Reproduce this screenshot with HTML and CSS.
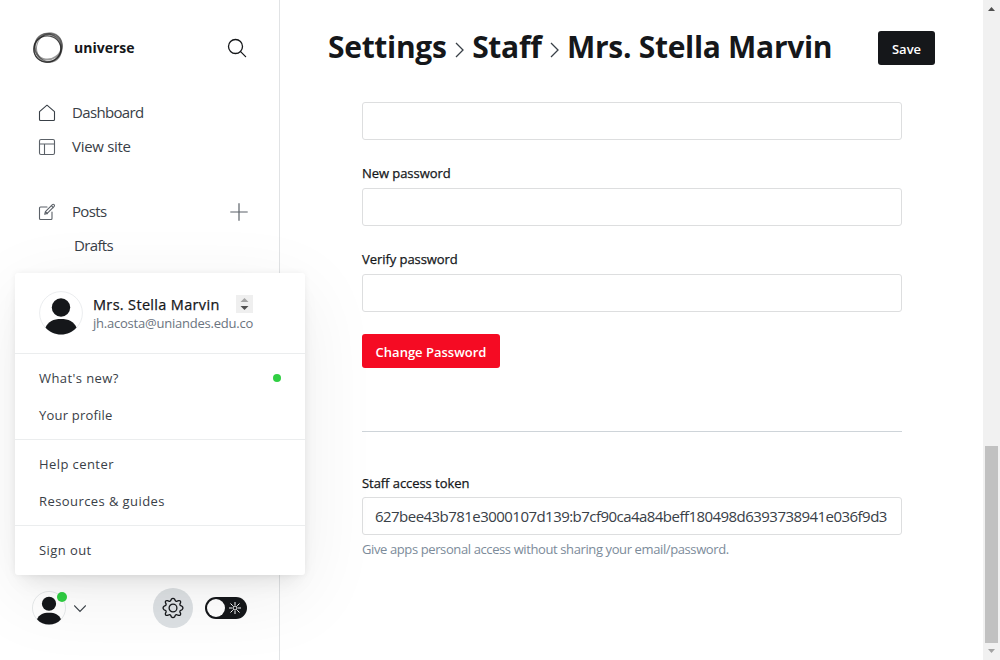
FILE: index.html
```html
<!DOCTYPE html>
<html lang="en">
<head>
<meta charset="utf-8">
<title>Settings - Staff - universe</title>
<link rel="stylesheet" href="styles.css">
</head>
<body>
<div class="app">
  <aside class="sidebar">
    <header class="brand">
      <svg class="logo" width="32" height="32" viewBox="0 0 32 32" fill="none" stroke="#222">
        <ellipse cx="15.300" cy="17" rx="13.600" ry="13.200" stroke-width="1.200" stroke-opacity=".8"/>
        <ellipse cx="17.300" cy="14.800" rx="13.800" ry="12.800" stroke-width="1.800" stroke-opacity=".45" transform="rotate(-35 16 16)"/>
        <ellipse cx="16" cy="16" rx="14.600" ry="12.900" stroke-width="1.400" stroke-opacity=".5" transform="rotate(62 16 16)"/>
        <ellipse cx="17.200" cy="15" rx="12.800" ry="14" stroke-width="1" stroke-opacity=".5" transform="rotate(20 16 16)"/>
        <ellipse cx="15.600" cy="16" rx="14.400" ry="13" stroke-width="1.200" stroke-opacity=".6" transform="rotate(-50 16 16)"/>
      </svg>
      <span class="brand-name">universe</span>
      <svg class="search" width="20" height="20" viewBox="0 0 20 20" fill="none" stroke="#15171a" stroke-width="1.3" stroke-linecap="round"><circle cx="8.5" cy="8.5" r="7"/><path d="M13.6 13.6 18.6 18.6"/></svg>
    </header>
    <nav class="nav">
      <a class="nav-item"><svg width="18" height="18" viewBox="0 0 18 18" fill="none" stroke="#394047" stroke-width="1.1" stroke-linejoin="round"><path d="M1.5 7.6 9 1.2l7.5 6.4v7.9a1 1 0 0 1-1 1h-13a1 1 0 0 1-1-1z"/></svg><span class="nav-text tight">Dashboard</span></a>
      <a class="nav-item raised"><svg width="18" height="18" viewBox="0 0 18 18" fill="none" stroke="#5b6168" stroke-width="1.1"><rect x="1.5" y="1.5" width="15" height="15" rx="1.5"/><path d="M1.5 6h15M6.5 6v10.5"/></svg><span class="nav-text loose">View site</span></a>
    </nav>
    <nav class="nav nav-content">
      <a class="nav-item"><svg width="18" height="18" viewBox="0 0 18 18" fill="none" stroke="#5b6168" stroke-width="1.1" stroke-linejoin="round" stroke-linecap="round"><path d="M9 4H2.5a1 1 0 0 0-1 1v10.5a1 1 0 0 0 1 1h10.500a1 1 0 0 0 1-1V9"/><path d="m6.700 11.300.7-2.700 7-7q.9-.7 1.700.1t.1 1.700l-7 7zM13.300 2.700l2 2M7.400 8.600l2 2"/></svg><span class="nav-text tight">Posts</span><svg class="plus" width="18" height="18" viewBox="0 0 18 18" stroke="#5b6168" stroke-width="1.2"><path d="M9 .3v17.400M.3 9h17.400"/></svg></a>
      <a class="nav-item nav-child"><span class="nav-text tight">Drafts</span></a>
    </nav>
    <footer class="account">
      <div class="avatar avatar-small">
        <svg width="34" height="34" viewBox="0 0 44 44"><circle cx="22" cy="22" r="21.400" fill="#fff" stroke="#dfe2e4"/><circle cx="22" cy="16.500" r="9.200" fill="#15171a"/><path d="M6.500 36.500C9 30.500 14.500 28 22 28s13 2.500 15.500 8.500C33.500 41.200 28 43.500 22 43.500S10.500 41.200 6.500 36.500z" fill="#15171a"/></svg>
        <i class="dot badge"></i>
      </div>
      <svg class="chevron" width="12" height="8" viewBox="0 0 12 8" fill="none" stroke="#394047" stroke-width="1.200" stroke-linecap="round"><path d="m.6.800 5.400 5.700L11.400.8"/></svg>
      <span class="gear"><svg width="22" height="22" viewBox="0 0 22 22" fill="none" stroke="#15171a" stroke-width="1.300" stroke-linejoin="round"><circle cx="11" cy="11" r="3.900"/><path d="M9.300 2.300Q11 .4 12.700 2.300L13.300 3.700Q14 4.700 15.200 4.100L16.600 3.600Q19 3.300 18.600 5.600L17.900 6.900Q17.500 8.100 18.700 8.600L20 9.300Q21.900 11 20 12.700L18.700 13.400Q17.500 13.900 17.900 15.100L18.600 16.400Q19 18.700 16.600 18.400L15.200 17.900Q14 17.300 13.300 18.300L12.700 19.700Q11 21.600 9.300 19.700L8.700 18.300Q8 17.300 6.800 17.900L5.400 18.400Q3 18.700 3.400 16.400L4.100 15.100Q4.500 13.900 3.300 13.400L2 12.700Q.1 11 2 9.300L3.300 8.600Q4.500 8.100 4.100 6.900L3.400 5.600Q3 3.300 5.400 3.600L6.800 4.100Q8 4.700 8.700 3.700z"/></svg></span>
      <span class="switch"><i class="knob"></i><svg width="12" height="12" viewBox="0 0 12 12" fill="none" stroke="#fff" stroke-width="1"><circle cx="6" cy="6" r="2"/><path d="M6 0v3M6 9v3M0 6h3M9 6h3M1.500 1.500l2.300 2.300M8.200 8.200l2.300 2.300M10.500 1.500 8.200 3.800M3.800 8.200l-2.300 2.300"/></svg></span>
    </footer>
    <section class="menu">
      <header class="profile">
        <div class="avatar"><svg width="44" height="44" viewBox="0 0 44 44"><circle cx="22" cy="22" r="21.400" fill="#fff" stroke="#ebedef"/><circle cx="22" cy="16.500" r="9.200" fill="#15171a"/><path d="M6.500 36.500C9 30.500 14.500 28 22 28s13 2.500 15.500 8.500C33.500 41.200 28 43.500 22 43.500S10.500 41.200 6.500 36.500z" fill="#15171a"/></svg></div>
        <div class="who"><div class="name-row"><span class="name">Mrs. Stella Marvin</span><span class="spinner"><svg width="17" height="18" viewBox="0 0 17 18"><path d="M4.500 7 8.500 3l4 4z" fill="#a3a3a3"/><path d="M4.500 11h8l-4 4z" fill="#505050"/></svg></span></div><div class="email">jh.acosta@uniandes.edu.co</div></div>
      </header>
      <div class="group"><a class="entry"><span>What's new?</span><i class="dot"></i></a><a class="entry entry-snug"><span>Your profile</span></a></div>
      <div class="group"><a class="entry"><span>Help center</span></a><a class="entry"><span>Resources &amp; guides</span></a></div>
      <div class="group"><a class="entry"><span>Sign out</span></a></div>
    </section>
  </aside>
  <main class="main">
    <header class="topbar">
      <h1 class="title"><span>Settings</span><svg class="sep" width="9" height="16" viewBox="0 0 9 16" fill="none" stroke="#394047" stroke-width="1.300"><path d="m1 1 7 7-7 7"/></svg><span>Staff</span><svg class="sep" width="9" height="16" viewBox="0 0 9 16" fill="none" stroke="#394047" stroke-width="1.300"><path d="m1 1 7 7-7 7"/></svg><span>Mrs. Stella Marvin</span></h1>
      <button class="btn save">Save</button>
    </header>
    <form class="form">
      <div class="input"></div>
      <label class="label">New password</label>
      <div class="input"></div>
      <label class="label">Verify password</label>
      <div class="input"></div>
      <button type="button" class="btn danger">Change Password</button>
      <hr class="rule">
      <label class="label token-label">Staff access token</label>
      <div class="input"><span class="token">627bee43b781e3000107d139:b7cf90ca4a84beff180498d6393738941e036f9d3</span></div>
      <p class="help">Give apps personal access without sharing your email/password.</p>
    </form>
  </main>
  <div class="scrollbar">
    <svg width="17" height="17" viewBox="0 0 17 17"><path d="M5 11h7L8.500 7z" fill="#505050"/></svg>
    <div class="thumb"></div>
    <svg width="17" height="17" viewBox="0 0 17 17"><path d="M5 6h7l-3.500 4z" fill="#a3a3a3"/></svg>
  </div>
</div>
</body>
</html>
```
FILE: styles.css
```css
* { box-sizing: border-box; }
body { margin: 0; background: #fff; color: #15171a; font-family: "Open Sans", "Noto Sans", sans-serif; }
svg { display: block; flex: none; }
span { white-space: nowrap; }
.app { display: flex; width: 1000px; height: 660px; overflow: hidden; }

.sidebar { position: relative; z-index: 1; display: flex; flex-direction: column; width: 280px; border-right: 1px solid #e1e3e5; }
.brand { display: flex; align-items: center; height: 96px; padding: 0 32px 0 32px; }
.brand-name { margin-left: 10px; padding-bottom: 2px; font-size: 14px; font-weight: 700; letter-spacing: 0; }
.search { margin-left: auto; }
.nav-item { display: flex; align-items: center; height: 34px; padding: 0 31px 0 38px; gap: 16px; font-size: 15px; color: #394047; }
.nav-text { padding-bottom: 2px; }
.raised { padding-bottom: 1px; }
.tight { letter-spacing: -.65px; }
.loose { letter-spacing: -.3px; padding-bottom: 1px; }
.nav-content { margin-top: 31px; }
.nav-child { padding-left: 74px; }
.plus { margin-left: auto; }
.account { display: flex; align-items: center; height: 40px; margin-top: auto; margin-bottom: 32px; padding-left: 32px; }
.avatar { position: relative; }
.dot { width: 8px; height: 8px; border-radius: 50%; background: #30cf43; }
.badge { position: absolute; top: 1px; right: -1px; width: 10px; height: 10px; }
.chevron { margin-left: 8px; margin-top: 1px; }
.gear { display: grid; place-items: center; width: 40px; height: 40px; margin-left: 67px; border-radius: 50%; background: #dde1e4; }
.switch { display: flex; align-items: center; justify-content: space-between; width: 42px; height: 22px; margin-left: 12px; padding: 0 6px 0 2px; border-radius: 11px; background: #15171a; }
.knob { width: 18px; height: 18px; border-radius: 50%; background: #fff; }

.menu { position: absolute; left: 15px; top: 273px; width: 290px; height: 302px; border-radius: 3px; background: #fff; box-shadow: 0 0 7px rgba(0,0,0,.06), 0 12px 20px -8px rgba(0,0,0,.1), 0 20px 80px rgba(0,0,0,.07); }
.profile { display: flex; height: 80px; padding: 18px 0 0 24px; gap: 10px; }
.name-row { display: flex; align-items: center; justify-content: space-between; width: 160px; height: 22px; margin-top: 2px; }
.name { font-size: 14.5px; letter-spacing: .33px; -webkit-text-stroke: .25px #15171a; }
.spinner { background: #efefef; }
.email { height: 18px; font-size: 13px; line-height: 17px; letter-spacing: -.22px; color: #6b7480; }
.group { height: 86px; padding-top: 5px; border-top: 1px solid #ebedee; }
.entry { display: flex; align-items: center; justify-content: space-between; height: 37px; padding: 0 24px; font-size: 13px; color: #394047; letter-spacing: .42px; }
.entry-snug { letter-spacing: .2px; }

.main { width: 703px; }
.topbar { display: flex; align-items: center; justify-content: space-between; height: 96px; padding: 0 48px; }
.title { display: flex; align-items: center; margin: 0; padding-bottom: 2px; font-size: 30px; line-height: 40px; font-weight: 700; letter-spacing: -.3px; }
.sep { margin: 5px 8.500px 0 8px; }
.btn { height: 34px; border: 0; border-radius: 3px; color: #fff; background: #15171a; font: 600 13px "Open Sans", sans-serif; white-space: nowrap; padding: 2px 0 0; }
.save { width: 57px; }
.form { display: flex; flex-direction: column; width: 540px; margin: 6px 0 0 82px; }
.input { display: flex; align-items: center; height: 38px; padding: 0 11px 0 12px; border: 1px solid #dddedf; border-radius: 3px; }
.label { height: 48px; padding-top: 23px; font-size: 13px; line-height: 20px; letter-spacing: -.06px; -webkit-text-stroke: .25px #15171a; }
.danger { width: 138px; margin-top: 22px; background: #f50b23; }
.rule { width: 540px; height: 1px; margin: 63px 0 0; border: 0; background: #ced4d9; }
.token-label { height: 65px; padding-top: 41px; }
.token { font-size: 15px; letter-spacing: -.54px; color: #394047; }
.help { margin: 5px 0 0; font-size: 13px; line-height: 19px; letter-spacing: -.39px; color: #7c8b9a; }

.scrollbar { display: flex; flex-direction: column; width: 17px; background: #f1f1f1; }
.thumb { width: 13px; height: 197px; margin: auto 2px 0; background: #c1c1c1; }
```
